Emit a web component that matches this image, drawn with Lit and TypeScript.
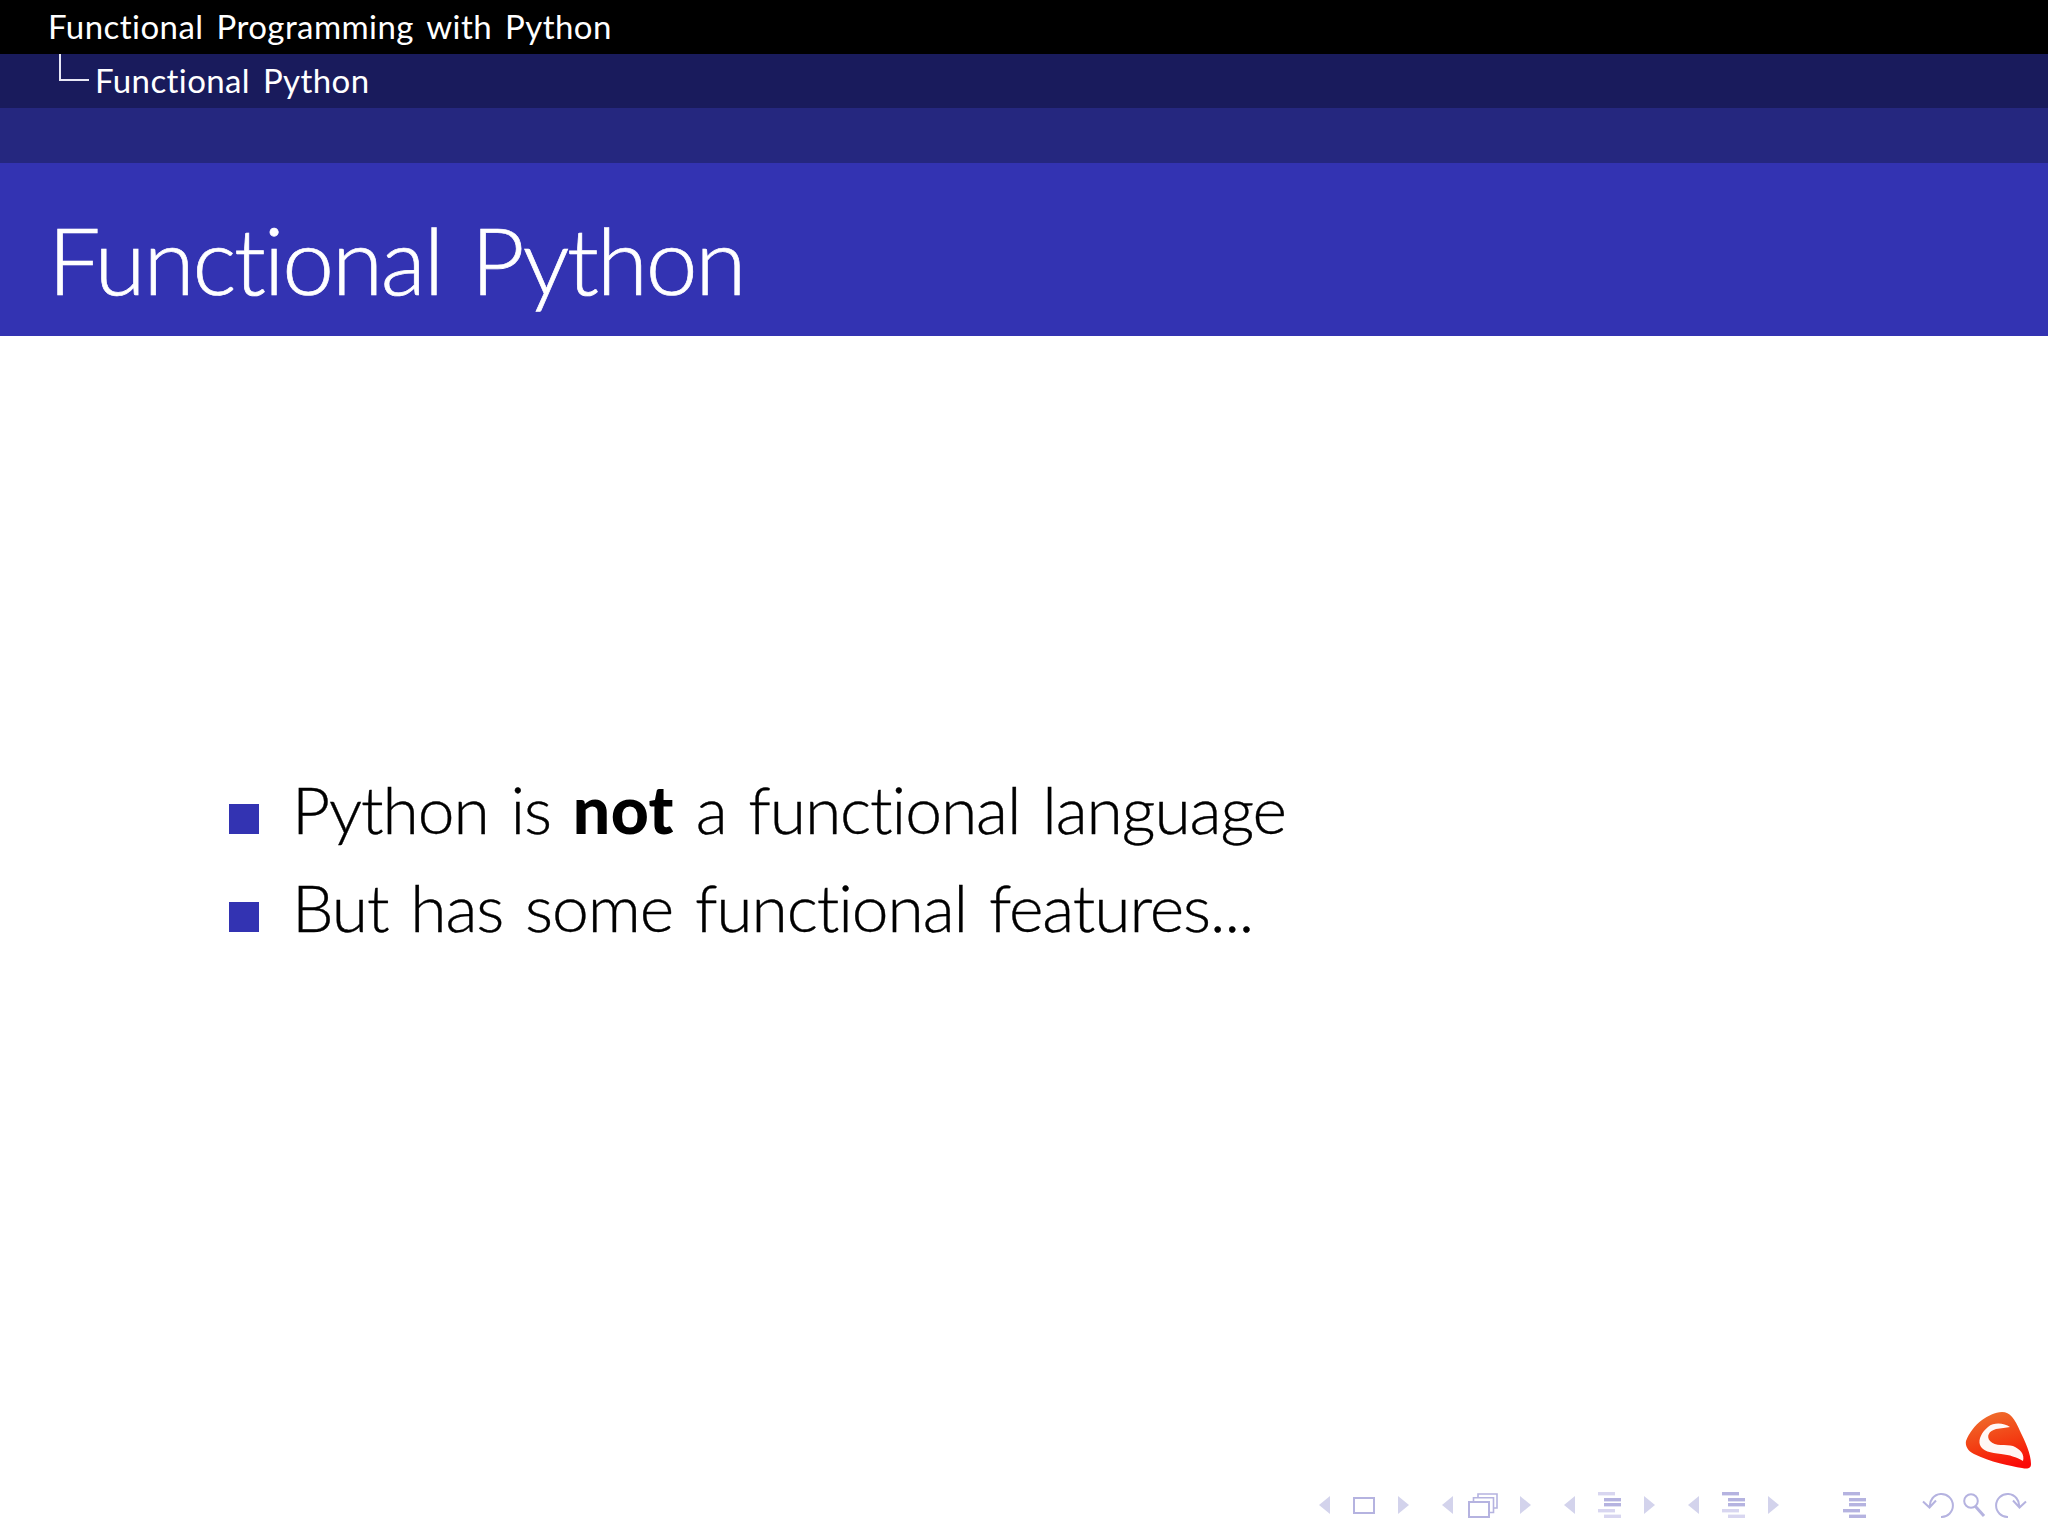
import { LitElement, html, css, svg } from "lit";
import { customElement } from "lit/decorators.js";

const L = "#b5b3e0";
const F = "#d8d6f0";

const arrowL = svg`<svg class="arrow" viewBox="0 0 11 18"><path d="M11 0V18L0 9Z" fill="#d3d3ec"/></svg>`;
const arrowR = svg`<svg class="arrow" viewBox="0 0 11 18"><path d="M0 0V18L11 9Z" fill="#d3d3ec"/></svg>`;
const frame = svg`<svg class="frame" viewBox="0 0 22 17"><rect x="1" y="1" width="20" height="15" fill="none" stroke="${L}" stroke-width="2"/></svg>`;
const stack = svg`<svg class="stack" viewBox="0 0 30 25"><path d="M10 4.700V1H29V15H25.500M5.500 9V4.700H25.500V19.500H21" fill="none" stroke="${L}" stroke-width="1.600"/><rect x="1" y="9" width="20" height="15" fill="#fff" stroke="${L}" stroke-width="2"/></svg>`;
const rows: [number, number][] = [[1.7, 0], [7.7, 6], [12.7, 6], [18.7, 0], [24.3, 6]];
const lines = (hi: number[]) => svg`<svg class="lines" viewBox="0 0 23 26">
  ${rows.map(([y, x], i) => svg`<rect x="${x}" y="${y - 1.700}" width="17" height="3.400" fill="${hi.includes(i) ? L : F}"/>`)}
</svg>`;
const back = svg`<svg class="hist" viewBox="0 0 32 25"><path d="M8 14A11.500 11.500 0 1 1 19 24M1 8.500L7.500 14.500L14 7.500" fill="none" stroke="${L}" stroke-width="2"/></svg>`;
const fwd = svg`<svg class="hist" viewBox="0 0 32 25"><path d="M24 14A11.500 11.500 0 1 0 13 24M31 8.500L24.500 14.500L18 7.500" fill="none" stroke="${L}" stroke-width="2"/></svg>`;
const search = svg`<svg class="search" viewBox="0 0 23 25"><circle cx="8" cy="8" r="6.800" fill="none" stroke="${L}" stroke-width="2"/><path d="M12.500 13.500L21 23" stroke="${L}" stroke-width="3" fill="none"/></svg>`;

@customElement("app-root")
export class AppRoot extends LitElement {
  static styles = css`
    :host {
      display: flex;
      flex-direction: column;
      width: 2048px;
      height: 1536px;
      background: #fff;
      font-family: Lato, "Open Sans", sans-serif;
      font-variant-ligatures: none;
      color: #000;
      overflow: hidden;
    }
    .bar { height: 54px; flex: none; color: #fff; display: flex; align-items: center; box-sizing: border-box; }
    .top { background: #000; padding: 0 0 3px 48px; font-size: 33px; letter-spacing: 0.45px; word-spacing: 4px; }
    .sub { background: #191b5c; padding-left: 59px; font-size: 33px; letter-spacing: 0.4px; word-spacing: 4px; align-items: flex-start; }
    .sub span { line-height: 52px; margin-left: 6px; }
    .tree { width: 30px; height: 28px; flex: none; }
    .mid { background: #25277f; height: 55px; }
    .title { background: #3333b2; height: 173px; padding-left: 48px; font-size: 93px; font-weight: 300; letter-spacing: -2.2px; word-spacing: 6px; align-items: flex-start; -webkit-text-stroke: 0.7px #fff; }
    .title span { line-height: 1; margin-top: 50px; }
    main { flex: 1; display: flex; flex-direction: column; padding: 437px 0 0 229px; gap: 28px; min-height: 0; font-size: 66px; font-weight: 300; letter-spacing: -1.1px; word-spacing: 5px; -webkit-text-stroke: 0.4px #000; }
    .item { display: flex; align-items: center; height: 70px; }
    .bullet { width: 30px; height: 30px; background: #3333b2; margin: 21px 33px 0 0; flex: none; }
    b { font-weight: 900; -webkit-text-stroke: 0; letter-spacing: 0.4px; }
    .logo { width: 66px; height: 58px; align-self: flex-end; margin: 0 17px 5px 0; flex: none; }
    .nav { height: 62px; flex: none; display: flex; align-items: center; padding-left: 1319px; }
    .nav svg { display: block; flex: none; }
    .arrow { width: 11px; height: 18px; }
    .frame { width: 22px; height: 17px; margin: 0 23px; }
    .stack { width: 30px; height: 25px; margin: 0 22px 0 15px; }
    .lines { width: 23px; height: 26px; margin: 0 23px; }
    .group { display: flex; align-items: center; margin-right: 33px; }
    .hist { width: 32px; height: 25px; }
    .search { width: 23px; height: 25px; margin: 0 9px; }
    .solo { margin: 0 33px 0 8px; }
  `;

  render() {
    return html`
      <div class="bar top">Functional Programming with Python</div>
      <div class="bar sub">
        <svg class="tree" viewBox="0 0 30 28"><path d="M1 0V26H30" fill="none" stroke="#e8e8f5" stroke-width="2"/></svg>
        <span>Functional Python</span>
      </div>
      <div class="bar mid"></div>
      <div class="bar title"><span>Functional Python</span></div>
      <main>
        <div class="item"><div class="bullet"></div><div>Python is <b>not</b> a functional language</div></div>
        <div class="item"><div class="bullet"></div><div>But has some functional features...</div></div>
      </main>
      <svg class="logo" viewBox="5 3 66 58">
        <defs>
          <linearGradient id="lg" x1="0.35" y1="0" x2="0.65" y2="1">
            <stop offset="0" stop-color="#ef6d2c"/>
            <stop offset="0.55" stop-color="#f33c12"/>
            <stop offset="1" stop-color="#fb0808"/>
          </linearGradient>
        </defs>
        <path d="M42 4C50 4 55 11 60 23C65 33 71 46 71 56C71 61 67 61 62 60C50 58 30 54 14 46C8 43 5 38 6 33C9 25 15 17 22 12C28 8 35 4 42 4Z" fill="url(#lg)"/>
        <path d="M50 19C44 15 34 14 28 19C22 24 18 31 20 37C22 43 31 45 41 46C50 47 56 49 63 53C65 46 60 41 53 38C46 36 35 39 30 33C26 28 29 23 36 21C41 20 46 20 50 19Z" fill="#fff" fill-opacity="0.96"/>
      </svg>
      <div class="nav">
        <div class="group">${arrowL}${frame}${arrowR}</div>
        <div class="group">${arrowL}${stack}${arrowR}</div>
        <div class="group">${arrowL}${lines([1, 2])}${arrowR}</div>
        <div class="group">${arrowL}${lines([0, 1, 2])}${arrowR}</div>
        <div class="group solo">${lines([0, 1, 2, 3, 4])}</div>
        <div class="group">${back}${search}${fwd}</div>
      </div>
    `;
  }
}
